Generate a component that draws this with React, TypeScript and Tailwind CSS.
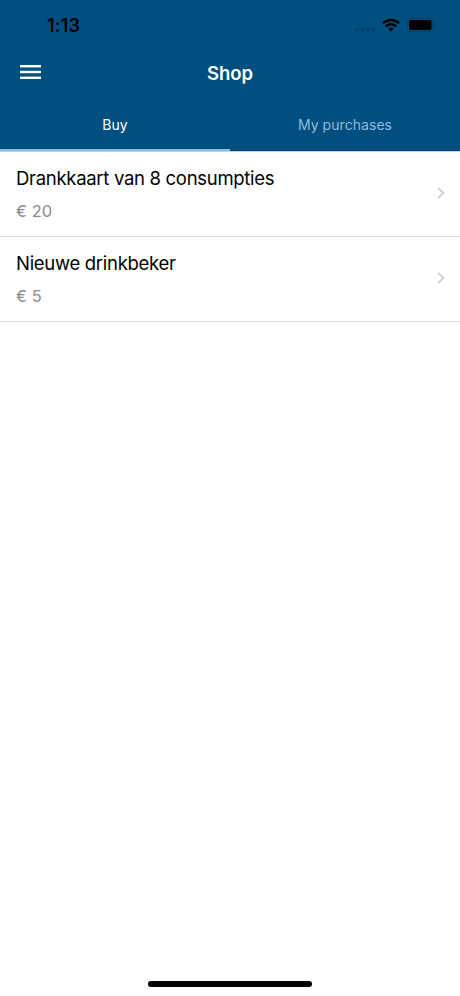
import { useState } from 'react';
import clsx from 'clsx';

interface Product {
    id: number;
    name: string;
    price: number;
}

const PRODUCTS: Product[] = [
    { id: 1, name: 'Drankkaart van 8 consumpties', price: 20 },
    { id: 2, name: 'Nieuwe drinkbeker', price: 5 },
];

const TABS = ['Buy', 'My purchases'];

function StatusBar() {
    return (
        <div className="flex h-[49px] items-center justify-between pl-[47px] pr-6 pt-[2px]">
            <span className="text-[18px] font-semibold leading-6 tracking-[0.2px] text-black">1:13</span>
            <div className="flex items-center">
                {/* No cellular signal */}
                <div className="mr-[7px] mt-2 flex gap-[2px]">
                    {[0, 1, 2, 3].map((dot) => (
                        <span key={dot} className="h-[3px] w-[3.5px] rounded-[1px] bg-[#004069]" />
                    ))}
                </div>
                <svg className="mr-[7px] -mt-px h-[14px] w-[18px]" viewBox="0 0 18 14" fill="none" stroke="#000" strokeWidth="2.4">
                    <path d="M1 5.2a11.5 11.5 0 0 1 16 0" />
                    <path d="M3.9 8.3a7.3 7.3 0 0 1 10.2 0" />
                    <path d="M9 13.6 6.2 10.8a4 4 0 0 1 5.6 0Z" fill="#000" stroke="none" />
                </svg>
                <svg className="-mt-px h-[14px] w-[29px]" viewBox="0 0 29 14">
                    <rect x="0.5" y="0.5" width="25" height="13" rx="3.5" fill="none" stroke="#003c64" />
                    <rect x="2" y="2" width="22.5" height="10" rx="2" fill="#000" />
                    <path d="M27 5v4c1-.3 1.5-1 1.5-2S28 5.300 27 5Z" fill="#003c64" />
                </svg>
            </div>
        </div>
    );
}

function ProductRow({ product }: { product: Product }) {
    return (
        <li className="flex h-[85px] items-center justify-between border-b border-[#dedfe0] pl-4 pr-[15px]">
            <div>
                <p className="text-[18.5px] leading-6 tracking-[-0.3px] text-black">{product.name}</p>
                <p className="mt-[9px] text-[16.5px] leading-6 text-[#8a8a8a]">€ {product.price}</p>
            </div>
            <svg className="mb-[2px] h-3 w-2" viewBox="0 0 8 12" fill="none" stroke="#c8c8cb" strokeWidth="1.6">
                <path d="m1 .8 5.400 5.200L1 11.200" />
            </svg>
        </li>
    );
}

export default function App() {
    const [activeTab, setActiveTab] = useState('Buy');

    return (
        <div className="flex h-[996px] w-[460px] flex-col bg-white font-['Inter','Liberation_Sans',sans-serif]">
            <header className="h-[152px] border-b border-[#bdd2e0] bg-[#004f80]">
                <StatusBar />
                <div className="grid h-[49px] grid-cols-3 items-center px-5">
                    <button type="button" aria-label="Menu" className="w-[21px] pb-[3px]">
                        <svg className="block h-[14px] w-[21px]" viewBox="0 0 21 14" fill="#fff">
                            <rect y="0" width="21" height="2.4" />
                            <rect y="5.8" width="21" height="2.4" />
                            <rect y="11.6" width="21" height="2.4" />
                        </svg>
                    </button>
                    <h1 className="pb-[2px] text-center text-[18.5px] font-semibold leading-6 text-white">Shop</h1>
                </div>
                <nav className="grid h-[53px] grid-cols-2">
                    {TABS.map((tab) => (
                        <button
                            key={tab}
                            type="button"
                            onClick={() => setActiveTab(tab)}
                            className={clsx(
                                'h-[53px] border-b-2 pt-px text-[14px] tracking-[0.05px]',
                                activeTab === tab ? 'border-[#8dbcdc] text-white' : 'border-transparent text-[#8dbcdc]'
                            )}
                        >
                            {tab}
                        </button>
                    ))}
                </nav>
            </header>

            <ul className="flex-1">
                {PRODUCTS.map((product) => (
                    <ProductRow key={product.id} product={product} />
                ))}
            </ul>

            {/* Home indicator */}
            <div className="mx-auto mb-[9px] h-[6px] w-[164px] rounded-full bg-black" />
        </div>
    );
}
